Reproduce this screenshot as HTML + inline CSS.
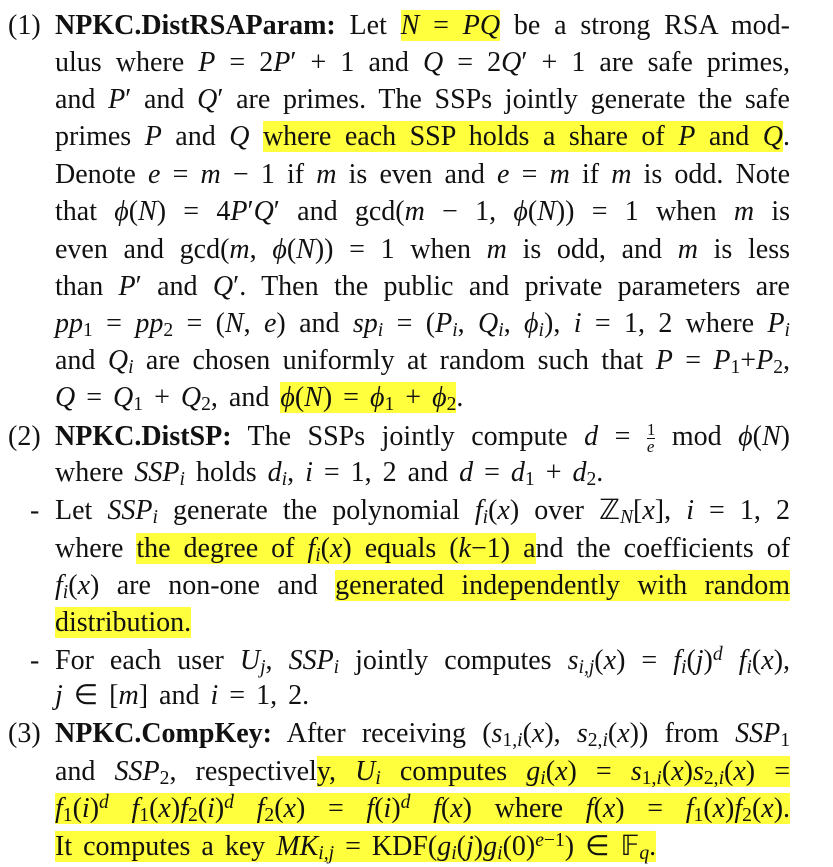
<!DOCTYPE html>
<html><head><meta charset="utf-8"><style>
body{margin:0;width:833px;height:867px;background:#fff;overflow:hidden;position:relative;font-family:"Liberation Serif",serif;font-size:28px;color:#111}
.l{position:absolute;left:55px;width:735px;height:37px;line-height:37px;white-space:nowrap;text-align:justify;text-align-last:justify}
.n{text-align:left;text-align-last:left;word-spacing:4px}
.m{position:absolute;left:8px;line-height:37px}
.d{position:absolute;left:30px;line-height:37px}
i{font-style:italic}
b{font-weight:bold}
.h{background:#ffff3d}
sub{font-size:70%;vertical-align:-4px;line-height:0}
sup{font-size:70%;vertical-align:9px;line-height:0}
</style></head><body>
<div class="m" style="top:7px">(1)</div>
<div class="l" style="top:7px"><b>NPKC.DistRSAParam:</b> Let <span class="h"><i>N</i> = <i>PQ</i></span> be a strong RSA mod-</div>
<div class="l" style="top:44px">ulus where <i>P</i> = 2<i>P</i>′ + 1 and <i>Q</i> = 2<i>Q</i>′ + 1 are safe primes,</div>
<div class="l" style="top:81px">and <i>P</i>′ and <i>Q</i>′ are primes. The SSPs jointly generate the safe</div>
<div class="l" style="top:118px">primes <i>P</i> and <i>Q</i> <span class="h">where each SSP holds a share of <i>P</i> and <i>Q</i></span>.</div>
<div class="l" style="top:156px">Denote <i>e</i> = <i>m</i> − 1 if <i>m</i> is even and <i>e</i> = <i>m</i> if <i>m</i> is odd. Note</div>
<div class="l" style="top:193px">that <i>ϕ</i>(<i>N</i>) = 4<i>P</i>′<i>Q</i>′ and gcd(<i>m</i> − 1, <i>ϕ</i>(<i>N</i>)) = 1 when <i>m</i> is</div>
<div class="l" style="top:231px">even and gcd(<i>m</i>, <i>ϕ</i>(<i>N</i>)) = 1 when <i>m</i> is odd, and <i>m</i> is less</div>
<div class="l" style="top:268px">than <i>P</i>′ and <i>Q</i>′. Then the public and private parameters are</div>
<div class="l" style="top:305px"><i>pp</i><sub>1</sub> = <i>pp</i><sub>2</sub> = (<i>N</i>, <i>e</i>) and <i>sp<sub>i</sub></i> = (<i>P<sub>i</sub></i>, <i>Q<sub>i</sub></i>, <i>ϕ<sub>i</sub></i>), <i>i</i> = 1, 2 where <i>P<sub>i</sub></i></div>
<div class="l" style="top:342px">and <i>Q<sub>i</sub></i> are chosen uniformly at random such that <i>P</i> = <i>P</i><sub>1</sub>+<i>P</i><sub>2</sub>,</div>
<div class="l n" style="top:379px"><i>Q</i> = <i>Q</i><sub>1</sub> + <i>Q</i><sub>2</sub>, and <span class="h"><i>ϕ</i>(<i>N</i>) = <i>ϕ</i><sub>1</sub> + <i>ϕ</i><sub>2</sub></span>.</div>
<div class="m" style="top:418px">(2)</div>
<div class="l" style="top:418px"><b>NPKC.DistSP:</b> The SSPs jointly compute <i>d</i> = <span style="display:inline-block;font-size:17px;line-height:16px;vertical-align:middle;text-align:center"><span style="display:block;border-bottom:1px solid #111">1</span><i>e</i></span> mod <i>ϕ</i>(<i>N</i>)</div>
<div class="l n" style="top:454px">where <i>SSP<sub>i</sub></i> holds <i>d<sub>i</sub></i>, <i>i</i> = 1, 2 and <i>d</i> = <i>d</i><sub>1</sub> + <i>d</i><sub>2</sub>.</div>
<div class="d" style="top:492px">-</div>
<div class="l" style="top:492px">Let <i>SSP<sub>i</sub></i> generate the polynomial <i>f<sub>i</sub></i>(<i>x</i>) over ℤ<sub><i>N</i></sub>[<i>x</i>], <i>i</i> = 1, 2</div>
<div class="l" style="top:530px">where <span class="h">the degree of <i>f<sub>i</sub></i>(<i>x</i>) equals (<i>k</i>−1) a</span>nd the coefficients of</div>
<div class="l" style="top:567px"><i>f<sub>i</sub></i>(<i>x</i>) are non-one and <span class="h">generated independently with random</span></div>
<div class="l n" style="top:604px"><span class="h">distribution.</span></div>
<div class="d" style="top:642px">-</div>
<div class="l" style="top:642px">For each user <i>U<sub>j</sub></i>, <i>SSP<sub>i</sub></i> jointly computes <i>s<sub>i,j</sub></i>(<i>x</i>) = <i>f<sub>i</sub></i>(<i>j</i>)<sup><i>d</i></sup> <i>f<sub>i</sub></i>(<i>x</i>),</div>
<div class="l n" style="top:677px"><i>j</i> ∈ [<i>m</i>] and <i>i</i> = 1, 2.</div>
<div class="m" style="top:715px">(3)</div>
<div class="l" style="top:715px"><b>NPKC.CompKey:</b> After receiving (<i>s</i><sub>1,<i>i</i></sub>(<i>x</i>), <i>s</i><sub>2,<i>i</i></sub>(<i>x</i>)) from <i>SSP</i><sub>1</sub></div>
<div class="l" style="top:753px">and <i>SSP</i><sub>2</sub>, respectivel<span class="h">y, <i>U<sub>i</sub></i> computes <i>g<sub>i</sub></i>(<i>x</i>) = <i>s</i><sub>1,<i>i</i></sub>(<i>x</i>)<i>s</i><sub>2,<i>i</i></sub>(<i>x</i>) =</span></div>
<div class="l" style="top:790px"><span class="h"><i>f</i><sub>1</sub>(<i>i</i>)<sup><i>d</i></sup> <i>f</i><sub>1</sub>(<i>x</i>)<i>f</i><sub>2</sub>(<i>i</i>)<sup><i>d</i></sup> <i>f</i><sub>2</sub>(<i>x</i>) = <i>f</i>(<i>i</i>)<sup><i>d</i></sup> <i>f</i>(<i>x</i>) where <i>f</i>(<i>x</i>) = <i>f</i><sub>1</sub>(<i>x</i>)<i>f</i><sub>2</sub>(<i>x</i>).</span></div>
<div class="l n" style="top:828px"><span class="h">It computes a key <i>MK<sub>i,j</sub></i> = KDF(<i>g<sub>i</sub></i>(<i>j</i>)<i>g<sub>i</sub></i>(0)<sup><i>e</i>−1</sup>) ∈ 𝔽<sub><i>q</i></sub>.</span></div>
</body></html>
